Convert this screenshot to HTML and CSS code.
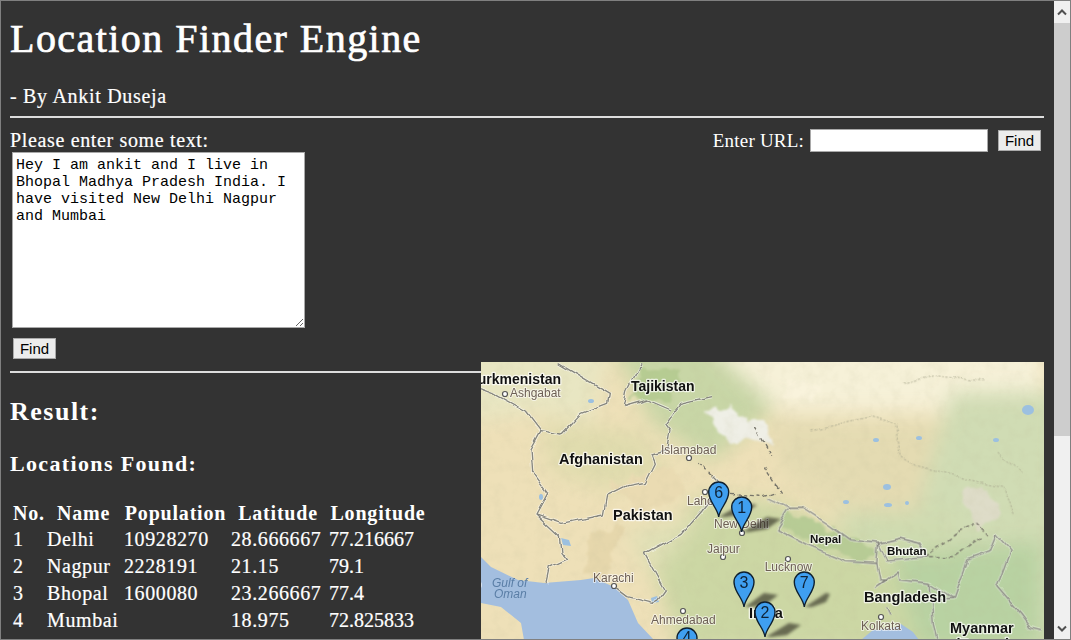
FILE: index.html
```html
<!DOCTYPE html>
<html lang="en">
<head>
  <meta charset="UTF-8" />
  <title>Location Finder Engine</title>
  <link rel="stylesheet" href="styles.css">
</head>
<body>
<div class="window">
  <div class="page">
    <h1>Location Finder Engine</h1>
    <p class="byline">- By Ankit Duseja</p>
    <hr>

    <div class="forms">
      <form class="text-form">
        <label for="text">Please enter some text:</label>
        <textarea id="text">Hey I am ankit and I live in Bhopal Madhya Pradesh India. I have visited New Delhi Nagpur and Mumbai</textarea>
        <button type="button" class="find">Find</button>
      </form>
      <form class="url-form">
        <label for="url">Enter URL:</label>
        <input type="text" id="url">
        <button type="button" class="find">Find</button>
      </form>
    </div>
    <hr class="hr-result">

    <h2>Result:</h2>
    <h3>Locations Found:</h3>

    <table>
      <colgroup>
        <col class="c-no"><col class="c-name"><col class="c-pop"><col class="c-lat"><col class="c-lng">
      </colgroup>
      <tr><th>No.</th><th>Name</th><th>Population</th><th>Latitude</th><th>Longitude</th></tr>
      <tr><td>1</td><td>Delhi</td><td>10928270</td><td>28.666667</td><td>77.216667</td></tr>
      <tr><td>2</td><td>Nagpur</td><td>2228191</td><td>21.15</td><td>79.1</td></tr>
      <tr><td>3</td><td>Bhopal</td><td>1600080</td><td>23.266667</td><td>77.4</td></tr>
      <tr><td>4</td><td>Mumbai</td><td></td><td>18.975</td><td>72.825833</td></tr>
    </table>

    <!-- map -->
    <svg class="map" width="563" height="277" viewBox="0 0 563 277">
      <defs>
        <filter id="soft" x="-20%" y="-20%" width="140%" height="140%"><feGaussianBlur stdDeviation="10"/></filter>
        <filter id="rough" filterUnits="userSpaceOnUse" x="-20" y="-20" width="603" height="317">
          <feTurbulence type="fractalNoise" baseFrequency="0.06" numOctaves="3" seed="9"/>
          <feDisplacementMap in="SourceGraphic" scale="16" xChannelSelector="R" yChannelSelector="G"/>
          <feGaussianBlur stdDeviation="1"/>
        </filter>
        <filter id="wiggle" filterUnits="userSpaceOnUse" x="-20" y="-20" width="603" height="317">
          <feTurbulence type="fractalNoise" baseFrequency="0.05" numOctaves="2" seed="2"/>
          <feDisplacementMap in="SourceGraphic" scale="8" xChannelSelector="R" yChannelSelector="G"/>
        </filter>
        <filter id="grain" x="0" y="0" width="100%" height="100%">
          <feTurbulence type="fractalNoise" baseFrequency="0.09" numOctaves="3" seed="4"/>
          <feColorMatrix values="0 0 0 0 0.5  0 0 0 0 0.48  0 0 0 0 0.3  0 0 0 1.1 -0.45"/>
        </filter>
        <g id="pin">
          <path d="M0 0C-1 -9 -10 -15 -10 -25A10 10 0 1 1 10 -25C10 -15 1 -9 0 0Z" fill="#3f9ff0" stroke="#0f2030" stroke-width="1.4"/>
        </g>
      </defs>

      <rect width="563" height="277" fill="#eee0b8"/>

      <!-- terrain -->
      <g filter="url(#soft)">
        <path d="M-20 -20H130L110 60L60 50L-20 60Z" fill="#e8e6c2"/>
        <path d="M130 -20H290V50L230 100L170 60Z" fill="#c8d6a6"/>
        <path d="M60 60L160 70L190 110L130 130L70 110Z" fill="#e0dcae"/>
        <path d="M225 -20H563V30L480 50L300 50Z" fill="#f6f1d8"/>
        <path d="M290 60L470 60L480 120L420 160L340 140L300 110Z" fill="#e4dbb2"/>
        <path d="M470 30H580V290H450L430 170Z" fill="#d0dcb4"/>
        <path d="M215 135L300 140L390 190L470 220L500 290H200L170 200Z" fill="#ccd7a4"/>
        <path d="M145 170L225 150L170 215Z" fill="#e0e0b6"/>
        <path d="M410 190L560 180L560 290L440 290Z" fill="#b8d2a2"/>
        <path d="M350 150H470V190H380Z" fill="#cfdbb0"/>
      </g>
      <g filter="url(#rough)">
        <path d="M222 48L250 44L268 62L286 62L296 84L270 74L250 82L236 66Z" fill="#efefe6"/>
        <path d="M305 148L345 165L400 190L380 200L320 175L298 162Z" fill="#b7cc95"/>
        <path d="M480 130L500 125L520 150L495 170Z" fill="#dedcc8"/>
        <path d="M130 120L195 105L205 130L160 155Z" fill="#eadbb2"/>
        <path d="M110 170L140 165L125 220L105 210Z" fill="#e6d7ac"/>
        <path d="M160 5L200 10L190 40L150 35Z" fill="#b6cc92"/>
        <path d="M310 18L345 25L330 40L300 35Z" fill="#f9f3dc"/>
      </g>
      <rect width="563" height="277" filter="url(#grain)" opacity=".22"/>

      <!-- water -->
      <path d="M0 195L10 205L37 218L63 221L100 218L113 216L133 225L147 238L157 261L173 278H43L40 261L20 245L0 241Z" fill="#a3bedf"/>
      <path d="M380 278L392 268L412 266L420 262L432 270L438 278Z" fill="#a3bedf"/>
      <g fill="#9cc0e0">
        <path d="M80 176L88 178L90 184L82 183Z"/><path d="M170 236L176 234L178 240L171 241Z"/>
        <ellipse cx="547" cy="48" rx="6" ry="5"/><ellipse cx="407" cy="143" rx="4" ry="2"/>
        <ellipse cx="426" cy="141" rx="2" ry="2"/><ellipse cx="406" cy="125" rx="4" ry="3"/>
        <ellipse cx="110" cy="39" rx="3" ry="2"/><ellipse cx="60" cy="135" rx="2" ry="3"/>
        <ellipse cx="438" cy="76" rx="3" ry="2"/><ellipse cx="515" cy="78" rx="3" ry="2"/>
        <ellipse cx="395" cy="78" rx="3" ry="2"/><ellipse cx="365" cy="140" rx="3" ry="2"/>
      </g>

      <!-- borders, traced in zoom coordinates -->
      <g filter="url(#wiggle)">
      <g fill="none" stroke-linejoin="round" transform="translate(0 -2) scale(.3333)">
        <g class="halo">
          <path d="M230 8L385 100L380 130L300 160L240 225L180 215L150 270L155 340L200 400L165 465L240 490L370 465L380 410L440 380L490 370L520 310L510 285L560 270L570 210L555 190L600 130L690 110"/>
          <path d="M165 465L235 530L240 575L260 600L205 625L195 670"/>
          <path d="M660 450L600 520L490 580L550 690L520 730L440 710L400 680"/>
          <path d="M0 85L40 100L130 150L180 215"/>
          <path d="M430 140L440 90L480 10M430 140L500 120L570 150"/>
          <path d="M690 345L720 375L660 450"/>
        </g>
        <g class="line">
          <path d="M230 8L385 100L380 130L300 160L240 225L180 215L150 270L155 340L200 400L165 465L240 490L370 465L380 410L440 380L490 370L520 310L510 285L560 270L570 210L555 190L600 130L690 110"/>
          <path d="M165 465L235 530L240 575L260 600L205 625L195 670"/>
          <path d="M660 450L600 520L490 580L550 690L520 730L440 710L400 680"/>
          <path d="M0 85L40 100L130 150L180 215"/>
          <path d="M430 140L440 90L480 10M430 140L500 120L570 150"/>
          <path d="M690 345L720 375L660 450"/>
        </g>
        <path class="dash" d="M650 310L690 345M750 400L850 410L880 400M850 320L900 400M820 200L870 290"/>
      </g>
      <g fill="none" stroke-linejoin="round" transform="translate(289 -2) scale(.3333)">
        <g class="halo">
          <path d="M-5 415L60 445L20 510L120 560L230 605L320 610L325 550L240 540L170 490L100 445L60 445"/>
          <path d="M325 550L390 535L450 550L470 590L350 600L325 550"/>
          <path d="M320 610L330 660L350 660L320 680L385 630L390 660L480 670L550 715L590 600L660 575L680 525L720 570L680 680L750 760L780 800L820 810"/>
          <path d="M350 740L360 770M480 670L490 800L500 840M550 715L470 720"/>
        </g>
        <g class="line">
          <path d="M-5 415L60 445L20 510L120 560L230 605L320 610L325 550L240 540L170 490L100 445L60 445"/>
          <path d="M325 550L390 535L450 550L470 590L350 600L325 550"/>
          <path d="M320 610L330 660L350 660L320 680L385 630L390 660L480 670L550 715L590 600L660 575L680 525L720 570L680 680L750 760L780 800L820 810"/>
          <path d="M350 740L360 770M480 670L490 800L500 840M550 715L470 720"/>
        </g>
        <path class="dash" d="M470 590L560 520L620 490L660 530M480 590L550 590L640 530"/>
        <path class="faint" d="M400 70L500 45L640 60M130 210L300 170L380 190L390 290L440 320L600 360L700 380L730 470M680 280L760 340"/>
      </g>
      </g>

      <!-- city dots -->
      <g class="dot">
        <circle cx="24" cy="32" r="2.500"/><circle cx="208" cy="96" r="2.500"/><circle cx="224" cy="130" r="2.500"/>
        <circle cx="261" cy="171" r="2.500"/><circle cx="242" cy="195" r="2.500"/><circle cx="133" cy="224" r="2.500"/>
        <circle cx="202" cy="249" r="2.500"/><circle cx="307" cy="197" r="2.500"/><circle cx="400" cy="255" r="2.500"/>
      </g>

      <!-- labels -->
      <g class="place">
        <text x="29" y="35">Ashgabat</text>
        <text x="180" y="92">Islamabad</text>
        <text x="206" y="143">Lahore</text>
        <text x="233" y="166">New Delhi</text>
        <text x="226" y="191">Jaipur</text>
        <text x="112" y="220">Karachi</text>
        <text x="170" y="262">Ahmedabad</text>
        <text x="331" y="209" text-anchor="end">Lucknow</text>
        <text x="380" y="268">Kolkata</text>
      </g>
      <g class="sea-label">
        <text x="11" y="225">Gulf of</text>
        <text x="13" y="236">Oman</text>
      </g>
      <g class="country">
        <text x="80" y="22" text-anchor="end" class="mid">Turkmenistan</text>
        <text x="150" y="29" class="mid">Tajikistan</text>
        <text x="78" y="102" class="big">Afghanistan</text>
        <text x="132" y="158" class="big">Pakistan</text>
        <text x="329" y="181">Nepal</text>
        <text x="406" y="193">Bhutan</text>
        <text x="383" y="240" class="big">Bangladesh</text>
        <text x="469" y="271" class="big">Myanmar</text>
        <text x="474" y="287" class="big">(Burma)</text>
        <text x="268" y="256" class="big">India</text>
        <text x="-7" y="226">b</text>
      </g>

      <!-- pin shadows -->
      <g fill="#2c2a20" opacity=".62" class="shadows">
        <path d="M238 155L262 141L276 143L262 152L245 155Z"/>
        <path d="M262 170L286 155L300 157L286 167L268 170Z"/>
        <path d="M264 245L283 231L297 233L284 243L270 245Z"/>
        <path d="M285 275L308 261L320 263L306 273L291 275Z"/>
        <path d="M324 245L345 231L349 232L345 240L331 245Z"/>
      </g>

      <!-- pins -->
      <g class="pin-num">
        <use href="#pin" x="206" y="301"/><text x="206" y="281">4</text>
        <use href="#pin" x="237.700" y="155"/><text x="237.700" y="136">6</text>
        <use href="#pin" x="260.700" y="170"/><text x="260.700" y="151">1</text>
        <use href="#pin" x="263" y="245"/><text x="263" y="226">3</text>
        <use href="#pin" x="284" y="275"/><text x="284" y="256">2</text>
        <use href="#pin" x="323.300" y="245"/><text x="323.300" y="226">7</text>
      </g>
    </svg>
  </div>

  <div class="scrollbar">
    <div class="arrow">
      <svg width="10" height="7" viewBox="0 0 10 7"><path d="M1 5.500L5 1.500L9 5.500" fill="none" stroke="#505050" stroke-width="2"/></svg>
    </div>
    <div class="thumb"></div>
    <div class="track"></div>
    <div class="arrow">
      <svg width="10" height="7" viewBox="0 0 10 7"><path d="M1 1.500L5 5.500L9 1.500" fill="none" stroke="#505050" stroke-width="2"/></svg>
    </div>
  </div>
</div>
</body>
</html>
```

FILE: styles.css
```css
html, body {
  margin: 0;
  height: 100%;
  overflow: hidden;
}

.window {
  box-sizing: border-box;
  width: 1071px;
  height: 640px;
  border: 1px solid #808080;
  display: flex;
  overflow: hidden;
}

.page {
  position: relative;
  flex: 1;
  box-sizing: border-box;
  padding: 0 10px 0 9px;
  background: #333;
  color: #fff;
  font-family: "Liberation Serif", serif;
  overflow: hidden;
}

h1 {
  margin: 16px 0 0;
  font-size: 40px;
  line-height: 44px;
  font-weight: normal;
  letter-spacing: 1.45px;
  -webkit-text-stroke: .7px #fff;
}

.byline {
  margin: 21px 0 0;
  font-size: 20px;
  line-height: 28px;
  letter-spacing: .7px;
  -webkit-text-stroke: .2px #fff;
}

hr {
  margin: 6px 0 0;
  height: 2px;
  border: 0;
  background: #ddd;
}

.forms {
  display: flex;
  justify-content: space-between;
  height: 247px;
}

.text-form label {
  display: block;
  margin-top: 10px;
  font-size: 20px;
  line-height: 24px;
  letter-spacing: .65px;
  -webkit-text-stroke: .2px #fff;
}

textarea {
  display: block;
  box-sizing: border-box;
  width: 293px;
  height: 176px;
  margin: 0 0 0 2px;
  padding: 4px 3px;
  border: 1px solid #a9a9a9;
  background: #fff;
  color: #000;
  font-family: "Liberation Mono", monospace;
  font-size: 15px;
  line-height: 17px;
}

.find {
  box-sizing: border-box;
  width: 43px;
  height: 21px;
  padding: 0;
  border: 1px solid #aaa;
  background: #ececec;
  color: #000;
  font-family: "Liberation Sans", sans-serif;
  font-size: 15px;
}

.text-form .find {
  display: block;
  margin: 10px 0 0 3px;
}

.url-form {
  display: flex;
  align-items: center;
  height: 23px;
  margin: 11px 3px 0 0;
}

.url-form label {
  margin-right: 6px;
  font-size: 19px;
  letter-spacing: .2px;
}

.url-form input {
  box-sizing: border-box;
  width: 178px;
  height: 23px;
  margin: 0 10px 0 0;
  border: 1px solid #a9a9a9;
  background: #fff;
}

h2 {
  margin: 22px 0 0;
  font-size: 26px;
  line-height: 34px;
  letter-spacing: 1.5px;
}

h3 {
  margin: 20px 0 0;
  font-size: 22px;
  line-height: 30px;
  letter-spacing: 1.35px;
}

table {
  margin-top: 21px;
  table-layout: fixed;
  width: 420px;
  border-collapse: separate;
  border-spacing: 2px 0;
  font-size: 20px;
}

.c-no { width: 32px; }
.c-name { width: 75px; }
.c-pop { width: 105px; }
.c-lat { width: 96px; }
.c-lng { width: 100px; }

th, td {
  height: 27px;
  padding: 0 1px;
  white-space: nowrap;
}

th {
  height: 26px;
  letter-spacing: .8px;
}

td {
  letter-spacing: .6px;
  -webkit-text-stroke: .2px #fff;
}

td:last-child {
  letter-spacing: 0;
}

/* lies over the rule and the table side, as in the real page */
.map {
  position: absolute;
  left: 480px;
  top: 361px;
  display: block;
}

.halo path {
  stroke: #fff;
  stroke-opacity: .55;
  stroke-width: 9;
}

.line path {
  stroke: #85857d;
  stroke-width: 4;
}

.dash {
  stroke: #77756a;
  stroke-width: 4;
  stroke-dasharray: 12 8;
}

.faint {
  stroke: #aaa88f;
  stroke-width: 2.500;
  stroke-dasharray: 7 5;
}

.dot circle {
  fill: #fff;
  stroke: #555;
  stroke-width: 1.2;
}

.place text,
.sea-label text,
.country text {
  font-family: "Liberation Sans", sans-serif;
  paint-order: stroke;
  stroke-linejoin: round;
}

.place text {
  font-size: 12px;
  fill: #6e6055;
  stroke: #fff;
  stroke-opacity: .6;
  stroke-width: 2px;
}

.sea-label text {
  font-size: 12px;
  font-style: italic;
  fill: #5a7ea6;
}

.country text {
  font-size: 11.5px;
  font-weight: bold;
  fill: #111;
  stroke: #fff;
  stroke-opacity: .7;
  stroke-width: 2.500px;
}

.country .big {
  font-size: 14.500px;
}

.country .mid {
  font-size: 14px;
}

.shadows {
  filter: blur(1.5px);
}

.pin-num text {
  font-family: "Liberation Sans", sans-serif;
  font-size: 16px;
  fill: #0e2236;
  text-anchor: middle;
}

.scrollbar {
  display: flex;
  flex-direction: column;
  width: 16px;
  background: #f0f0f0;
}

.arrow {
  height: 22px;
  display: flex;
  align-items: center;
  justify-content: center;
  background: #f0f0f0;
}

.thumb {
  height: 413px;
  background: #cdcdcd;
}

.track {
  flex: 1;
}
```
